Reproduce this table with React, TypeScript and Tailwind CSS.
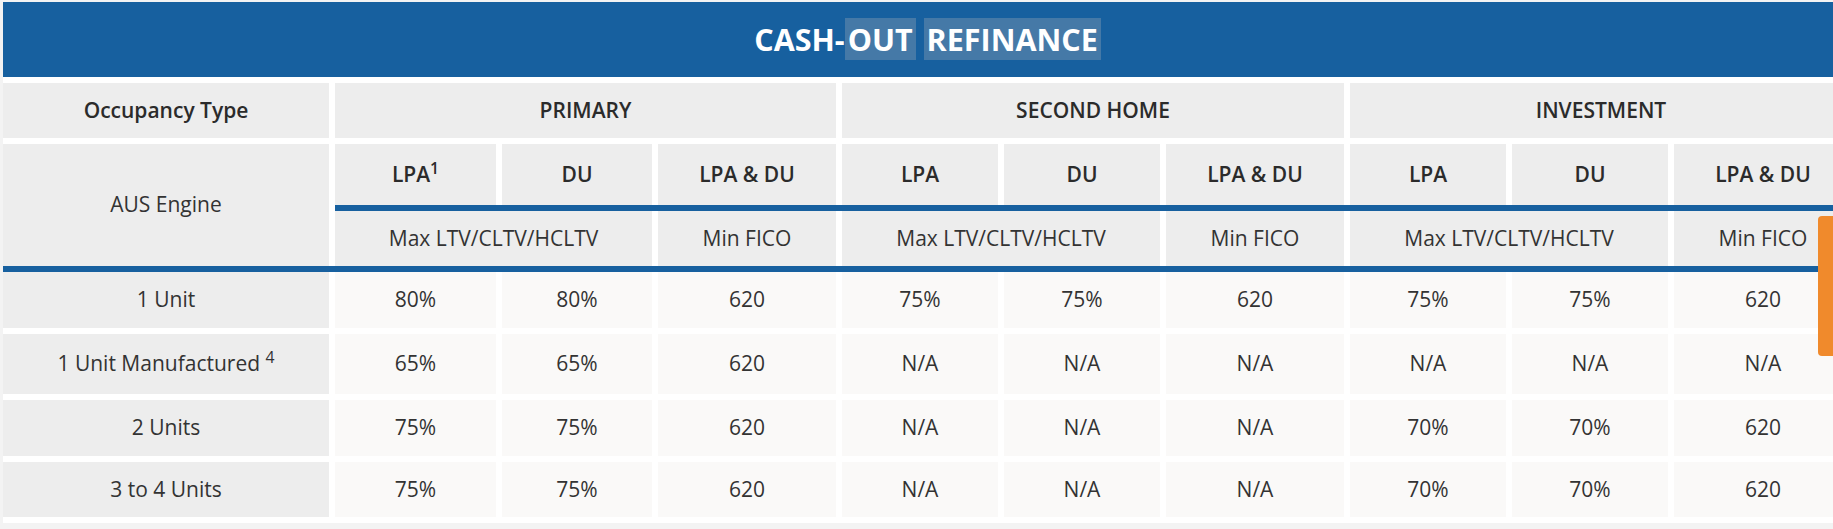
import React from 'react';

const font = { fontFamily: '"Open Sans", "Noto Sans", sans-serif' };

// Daten der Tabelle
const rows = [
  { label: '1 Unit', sup: '', values: ['80%', '80%', '620', '75%', '75%', '620', '75%', '75%', '620'], h: 'h-[56px]' },
  { label: '1 Unit Manufactured', sup: '4', values: ['65%', '65%', '620', 'N/A', 'N/A', 'N/A', 'N/A', 'N/A', 'N/A'], h: 'h-[60px]' },
  { label: '2 Units', sup: '', values: ['75%', '75%', '620', 'N/A', 'N/A', 'N/A', '70%', '70%', '620'], h: 'h-[56px]' },
  { label: '3 to 4 Units', sup: '', values: ['75%', '75%', '620', 'N/A', 'N/A', 'N/A', '70%', '70%', '620'], h: 'h-[55px]' },
];

const engines = [
  { label: 'LPA', sup: '1', cls: 'col-start-2' },
  { label: 'DU', sup: '', cls: 'col-start-3' },
  { label: 'LPA & DU', sup: '', cls: 'col-start-4' },
  { label: 'LPA', sup: '', cls: 'col-start-5' },
  { label: 'DU', sup: '', cls: 'col-start-6' },
  { label: 'LPA & DU', sup: '', cls: 'col-start-7' },
  { label: 'LPA', sup: '', cls: 'col-start-8' },
  { label: 'DU', sup: '', cls: 'col-start-9' },
  { label: 'LPA & DU', sup: '', cls: 'col-start-10' },
];

const metrics = [
  { label: 'Max LTV/CLTV/HCLTV', cls: 'col-start-2 col-span-2' },
  { label: 'Min FICO', cls: 'col-start-4' },
  { label: 'Max LTV/CLTV/HCLTV', cls: 'col-start-5 col-span-2' },
  { label: 'Min FICO', cls: 'col-start-7' },
  { label: 'Max LTV/CLTV/HCLTV', cls: 'col-start-8 col-span-2' },
  { label: 'Min FICO', cls: 'col-start-10' },
];

const cols = 'grid-cols-[326px_161px_150px_178px_156px_156px_178px_156px_156px_178px]';

const App: React.FC = () => {
  return (
    <div className="relative min-h-screen overflow-hidden bg-[#f3f3f3] pt-[2px] pl-[3px]" style={font}>
      <div className="w-[1849px] bg-white pb-[6px]">
        <div className="flex h-[75px] items-center justify-center bg-[#17609f]">
          <h2 className="text-[30.5px] font-bold text-white">
            CASH-<span className="bg-[#4579a7] px-[3px]">OUT</span> <span className="bg-[#4579a7] px-[3px]">REFINANCE</span>
          </h2>
        </div>

        <div className={`mt-[6px] grid ${cols} grid-rows-[55px_6px_61px_6px_55px] gap-x-[6px] text-[21px] text-[#2b2b2b]`}>
          <div className="col-start-1 row-start-1 flex items-center justify-center bg-[#ededed] font-semibold">Occupancy Type</div>
          <div className="col-start-2 col-span-3 row-start-1 flex items-center justify-center bg-[#ededed] font-semibold">PRIMARY</div>
          <div className="col-start-5 col-span-3 row-start-1 flex items-center justify-center bg-[#ededed] font-semibold">SECOND HOME</div>
          <div className="col-start-8 col-span-3 row-start-1 flex items-center justify-center bg-[#ededed] font-semibold">INVESTMENT</div>

          <div className="col-start-1 row-start-3 row-span-3 flex items-center justify-center bg-[#ededed] text-[#333]">AUS Engine</div>

          {engines.map((e, i) => (
            <div key={i} className={`${e.cls} row-start-3 flex items-center justify-center bg-[#ededed] font-semibold`}>
              <span>
                {e.label}
                {e.sup && <sup>{e.sup}</sup>}
              </span>
            </div>
          ))}

          <div className="col-start-2 col-end-11 row-start-4 bg-[#17609f]" />

          {metrics.map((m, i) => (
            <div key={i} className={`${m.cls} row-start-5 flex items-center justify-center bg-[#ededed] text-[#333]`}>
              {m.label}
            </div>
          ))}
        </div>

        <div className="h-[6px] bg-[#17609f]" />

        <div className={`grid ${cols} gap-[6px] text-[21px] text-[#333]`}>
          {rows.map((r) => (
            <React.Fragment key={r.label}>
              <div className={`${r.h} flex items-center justify-center bg-[#ededed]`}>
                <span>
                  {r.label}
                  {r.sup && <> <sup>{r.sup}</sup></>}
                </span>
              </div>
              {r.values.map((v, j) => (
                <div key={j} className={`${r.h} flex items-center justify-center bg-[#faf9f8]`}>
                  {v}
                </div>
              ))}
            </React.Fragment>
          ))}
        </div>
      </div>

      <div className="absolute right-0 top-[216px] h-[140px] w-[15px] rounded-l-[4px] bg-[#f08a2c]" />
    </div>
  );
};

export default App;
